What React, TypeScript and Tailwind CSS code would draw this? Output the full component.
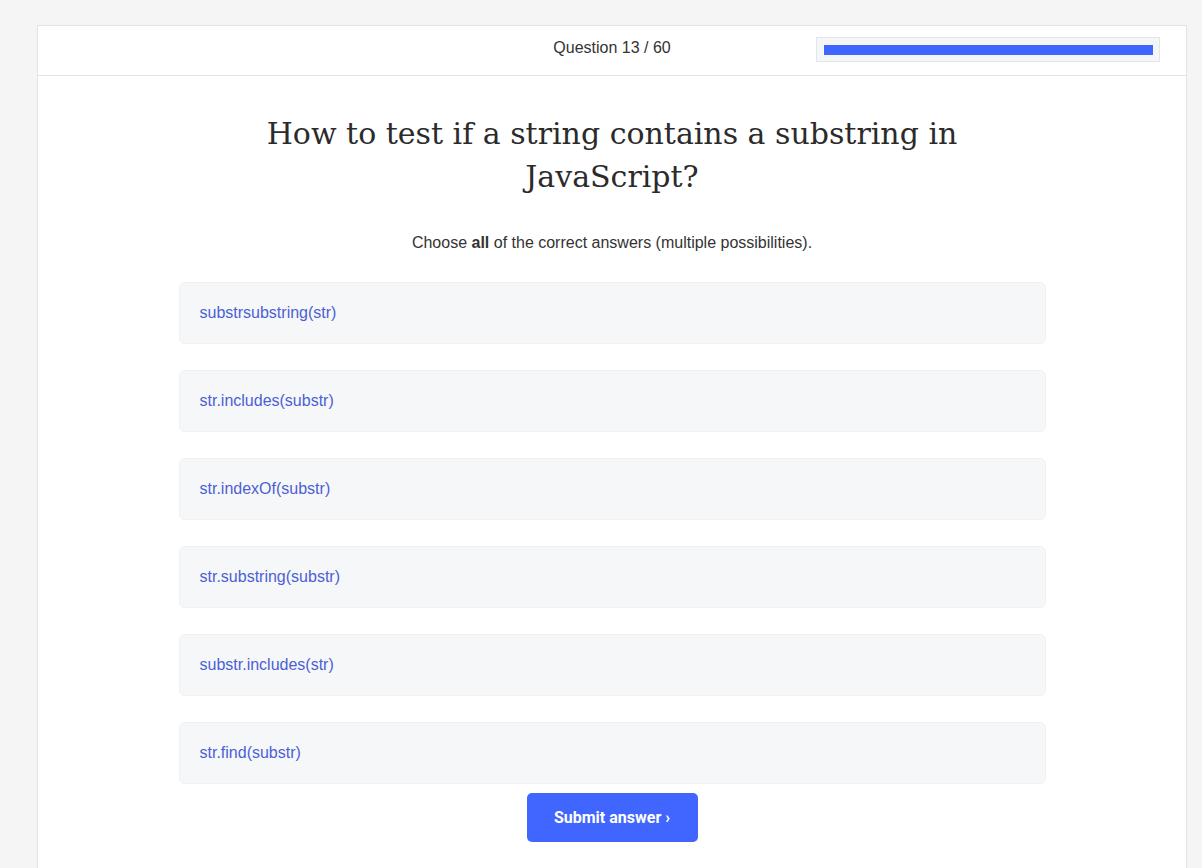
import React, { useState } from "react";

const answers = [
  "substrsubstring(str)",
  "str.includes(substr)",
  "str.indexOf(substr)",
  "str.substring(substr)",
  "substr.includes(str)",
  "str.find(substr)",
];

const App: React.FC = () => {
  const [selected, setSelected] = useState<number[]>([]);

  const toggle = (i: number) => {
    setSelected((prev) => (prev.includes(i) ? prev.filter((x) => x !== i) : [...prev, i]));
  };

  return (
    <div className="min-h-[868px] bg-[#f5f5f5] pt-[25px] pl-[37px] pr-[15px] font-['Liberation_Sans',Arial,sans-serif]">
      <div className="bg-white border border-[#e4e4e4] border-b-0 min-h-[843px]">
        <div className="grid grid-cols-3 items-center h-[50px] border-b border-[#e4e4e4]">
          <div />
          <div className="text-center text-[16px] text-[#333] pb-[5px]">Question 13 / 60</div>
          <div className="flex justify-end pr-[26px] pb-[2px]">
            <div className="w-[344px] h-[25px] border border-[#e2e6ec] bg-[#f5f6f8] pl-[7px] pr-[6px] flex items-center">
              <div className="h-[10px] w-full bg-[#4066ff]" />
            </div>
          </div>
        </div>

        <div className="flex flex-col items-center pt-[36px]">
          <h1 className="w-[720px] text-center text-[30px] leading-[43px] text-[#2b2b2b] font-['DejaVu_Serif',Georgia,serif]">
            How to test if a string contains a substring in JavaScript?
          </h1>
          <p className="mt-[33px] text-[16px] text-[#333]">
            Choose <b>all</b> of the correct answers (multiple possibilities).
          </p>

          <div className="mt-[27px] w-[867px] flex flex-col gap-[26px]">
            {answers.map((a, i) => (
              <button
                key={a}
                onClick={() => toggle(i)}
                className={
                  "h-[62px] rounded-[6px] border text-left pl-[20px] text-[16px] text-[#4c5fd5] " +
                  (selected.includes(i) ? "bg-[#e8ecff] border-[#4066ff]" : "bg-[#f6f7f9] border-[#f0f1f3]")
                }
              >
                {a}
              </button>
            ))}
          </div>

          <button className="mt-[9px] w-[171px] h-[49px] rounded-[5px] bg-[#4066ff] text-white text-[16px] font-bold font-['Roboto',sans-serif]">
            Submit answer ›
          </button>
        </div>
      </div>
    </div>
  );
};

export default App;
